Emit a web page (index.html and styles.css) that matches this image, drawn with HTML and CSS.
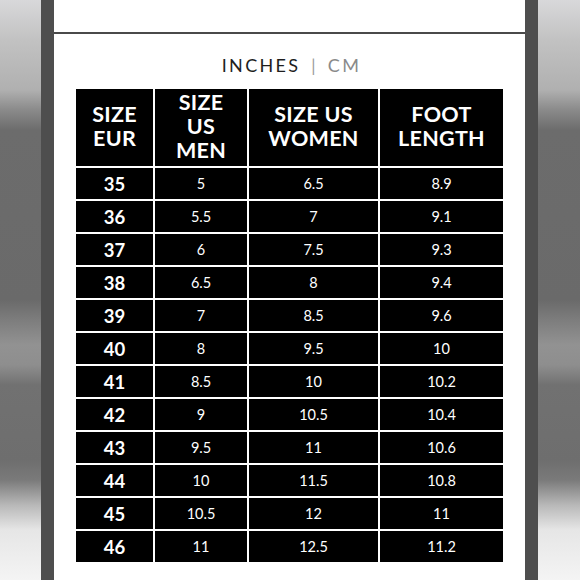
FILE: index.html
```html
<!DOCTYPE html>
<html>
<head>
<meta charset="utf-8">
<link rel="stylesheet" href="styles.css">
</head>
<body>
<div class="frame">
  <div class="side side-left"></div>
  <div class="bar"></div>
  <main class="panel">
    <div class="topline"></div>
    <div class="units"><span class="on">INCHES</span><span class="sep">|</span><span class="off">CM</span></div>
    <div class="chart">
      <div class="hd">SIZE<br>EUR</div>
      <div class="hd">SIZE<br>US<br>MEN</div>
      <div class="hd">SIZE US<br>WOMEN</div>
      <div class="hd">FOOT<br>LENGTH</div>

      <div class="eu">35</div><div class="v">5</div><div class="v">6.5</div><div class="v">8.9</div>
      <div class="eu">36</div><div class="v">5.5</div><div class="v">7</div><div class="v">9.1</div>
      <div class="eu">37</div><div class="v">6</div><div class="v">7.5</div><div class="v">9.3</div>
      <div class="eu">38</div><div class="v">6.5</div><div class="v">8</div><div class="v">9.4</div>
      <div class="eu">39</div><div class="v">7</div><div class="v">8.5</div><div class="v">9.6</div>
      <div class="eu">40</div><div class="v">8</div><div class="v">9.5</div><div class="v">10</div>
      <div class="eu">41</div><div class="v">8.5</div><div class="v">10</div><div class="v">10.2</div>
      <div class="eu">42</div><div class="v">9</div><div class="v">10.5</div><div class="v">10.4</div>
      <div class="eu">43</div><div class="v">9.5</div><div class="v">11</div><div class="v">10.6</div>
      <div class="eu">44</div><div class="v">10</div><div class="v">11.5</div><div class="v">10.8</div>
      <div class="eu">45</div><div class="v">10.5</div><div class="v">12</div><div class="v">11</div>
      <div class="eu">46</div><div class="v">11</div><div class="v">12.5</div><div class="v">11.2</div>
    </div>
  </main>
  <div class="bar"></div>
  <div class="side side-right"></div>
</div>
</body>
</html>
```

FILE: styles.css
```css
html, body {
  margin: 0;
  padding: 0;
  width: 580px;
  height: 580px;
  overflow: hidden;
}
body {
  font-family: Lato, "Open Sans", "DejaVu Sans", sans-serif;
  background: #fff;
}
.frame {
  display: flex;
  width: 580px;
  height: 580px;
}
.side {
  background: linear-gradient(to bottom,
    #d8d8da 0px, #c2c2c2 40px, #b0b0b0 90px, #8a8a8a 110px, #6c6c6c 130px,
    #6a6a6a 300px, #7d7d7d 320px, #929292 345px, #8e8e8e 365px, #717171 385px,
    #6e6e6e 460px, #7a7a7a 480px, #b8b8b8 505px, #e6e6e6 530px, #f4f4f4 580px);
}
.side-left { width: 41px; }
.side-right { width: 42px; }
.bar {
  width: 13px;
  background: #4e4e4e;
}
.panel {
  width: 471px;
  background: #fff;
  display: flex;
  flex-direction: column;
}
.topline {
  margin-top: 32px;
  height: 2px;
  background: #4a4a4a;
}
.units {
  margin-top: 20px;
  height: 22px;
  display: flex;
  justify-content: center;
  align-items: center;
  font-size: 18px;
  letter-spacing: 2.3px;
  padding-left: 4px;
  margin-bottom: 2px;
}
.units .on { color: #1e1e1e; }
.units .sep { color: #9a9a9a; margin: 0 10px 0 11px; font-size: 17px; }
.units .off { color: #8a8a8a; }
.chart {
  margin: 11px 0 0 22px;
  width: 427px;
  display: grid;
  grid-template-columns: 77px 92px 129px 123px;
  grid-template-rows: 77px repeat(12, 31px);
  gap: 2px;
  background: #fff;
}
.chart > div {
  background: #000;
  color: #fff;
  display: flex;
  align-items: center;
  justify-content: center;
  text-align: center;
}
.hd {
  font-size: 21.5px;
  font-weight: 700;
  line-height: 24px;
  letter-spacing: 0.3px;
  padding-bottom: 4px;
  box-sizing: border-box;
}
.eu {
  font-size: 18.5px;
  font-weight: 700;
}
.v {
  font-size: 14.5px;
  font-weight: 400;
}
```
